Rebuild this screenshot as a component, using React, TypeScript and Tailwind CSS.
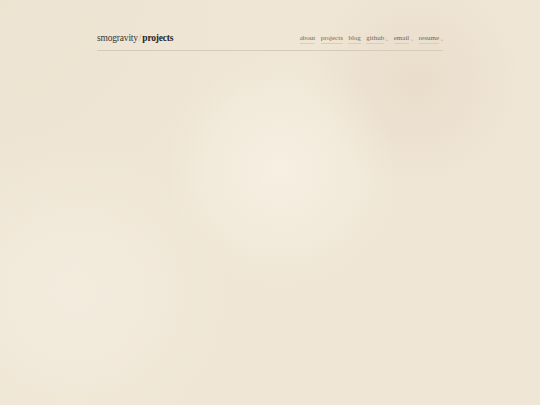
export default function App() {
  const nav = [
    { label: "about", ext: false },
    { label: "projects", ext: false },
    { label: "blog", ext: false },
    { label: "github", ext: true },
    { label: "email", ext: true },
    { label: "resume", ext: true },
  ];

  return (
    <div
      className="min-h-screen w-full bg-[#efe6d5] text-[#2b2723]"
      style={{
        fontFamily: '"Liberation Serif", "DejaVu Serif", serif',
        backgroundImage:
          "radial-gradient(circle at 52% 42%, rgba(247,241,228,0.9) 0, rgba(247,241,228,0) 32%), radial-gradient(circle at 77% 20%, rgba(232,218,200,0.8) 0, rgba(232,218,200,0) 20%), radial-gradient(circle at 14% 72%, rgba(245,238,225,0.7) 0, rgba(245,238,225,0) 28%), radial-gradient(circle at 0% 0%, rgba(234,224,206,0.5) 0, rgba(234,224,206,0) 40%)",
      }}
    >
      <header className="mx-auto max-w-[346px] pt-[34px]">
        <div className="flex items-end justify-between border-b border-[#d5cbb9] pb-[6px]">
          <a className="text-[9.5px] leading-none tracking-[-0.02em]">
            <span className="text-[#3a3530]">smogravity</span>
            <span className="mx-[1px] text-[#b3a996]">/</span>
            <span className="font-bold text-[#26221e]">projects</span>
          </a>
          <nav className="flex items-end gap-[5.5px] text-[7px] leading-none text-[#6d665d]">
            {nav.map((n) => (
              <span key={n.label} className="flex items-end">
                <a className="border-b border-[#d8cebd] pb-[1px]">{n.label}</a>
                {n.ext ? (
                  <span className="ml-[1.5px] pb-[1.5px] text-[5px] text-[#a9a091]">»</span>
                ) : null}
              </span>
            ))}
          </nav>
        </div>
      </header>
    </div>
  );
}
